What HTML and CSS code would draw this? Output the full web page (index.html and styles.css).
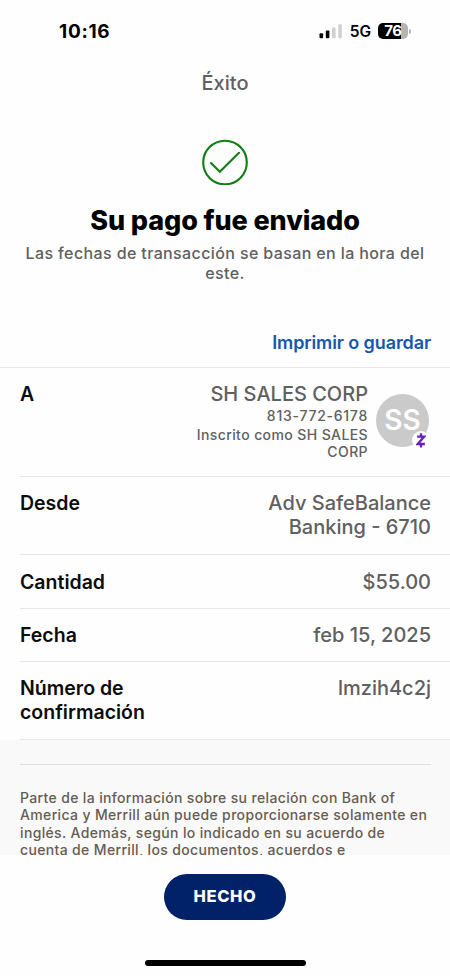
FILE: index.html
```html
<!DOCTYPE html>
<html lang="es">
<head>
    <meta charset="UTF-8">
    <meta name="viewport" content="width=device-width, initial-scale=1.0">
    <title>Éxito</title>
    <link rel="stylesheet" href="styles.css">
</head>
<body>
    <div class="screen">
        <div class="status-bar">
            <span class="time">10:16</span>
            <div class="status-icons">
                <svg class="signal" width="24" height="15" viewBox="0 0 24 15">
                    <rect x="0.5" y="9.2" width="3.6" height="5" rx="1"/>
                    <rect x="6.8" y="6.4" width="3.6" height="7.8" rx="1"/>
                    <rect class="off" x="13" y="3.4" width="3.6" height="10.8" rx="1"/>
                    <rect class="off" x="19.3" y="0.2" width="3.6" height="14" rx="1"/>
                </svg>
                <span class="network">5G</span>
                <div class="battery"><span>76</span></div>
                <div class="battery-tip"></div>
            </div>
        </div>

        <header class="nav-title">Éxito</header>

        <section class="result">
            <svg class="check" width="46" height="46" viewBox="0 0 46 46">
                <circle cx="23" cy="23.5" r="21.8"/>
                <path d="M9 24 L17.8 32.7 L37 13.8"/>
            </svg>
            <h1>Su pago fue enviado</h1>
            <p>Las fechas de transacción se basan en la hora del este.</p>
        </section>

        <div class="actions">
            <a href="#">Imprimir o guardar</a>
        </div>

        <div class="details">
            <div class="row row-to">
                <span class="label">A</span>
                <div class="recipient">
                    <div class="recipient-text">
                        <div class="value">SH SALES CORP</div>
                        <div class="small phone">813-772-6178</div>
                        <div class="small">Inscrito como SH SALES CORP</div>
                    </div>
                    <div class="avatar">
                        <span>SS</span>
                        <div class="zelle">
                            <svg width="10" height="15" viewBox="0 0 10 15">
                                <path d="M5 0.3 V3 M1.2 3.6 H8.2 L1.8 11 H8.9 M5 11.5 V14.5"/>
                            </svg>
                        </div>
                    </div>
                </div>
            </div>
            <div class="row row-from">
                <span class="label">Desde</span>
                <span class="value">Adv SafeBalance<br>Banking - 6710</span>
            </div>
            <div class="row">
                <span class="label">Cantidad</span>
                <span class="value">$55.00</span>
            </div>
            <div class="row">
                <span class="label">Fecha</span>
                <span class="value">feb 15, 2025</span>
            </div>
            <div class="row row-number">
                <span class="label">Número de<br>confirmación</span>
                <span class="value">lmzih4c2j</span>
            </div>
        </div>

        <div class="disclosure">
            <p>
                Parte de la información sobre su relación con Bank of<br>
                America y Merrill aún puede proporcionarse solamente en<br>
                inglés. Además, según lo indicado en su acuerdo de<br>
                cuenta de Merrill, los documentos, acuerdos e
            </p>
        </div>

        <footer class="bottom">
            <button class="done">HECHO</button>
            <div class="home-bar"></div>
        </footer>
    </div>
</body>
</html>
```
FILE: styles.css
```css
:root {
    --text: #0c0c0c;
    --gray: #606060;
    --line: #e6e6e6;
    --link: #1257b0;
    --navy: #012169;
    --green: #117d14;
}

* {
    box-sizing: border-box;
}

body {
    margin: 0;
    background: #fefefe;
    color: var(--text);
    font-family: Inter, "Liberation Sans", sans-serif;
}

.screen {
    width: 450px;
    height: 976px;
    overflow: hidden;
    display: flex;
    flex-direction: column;
}

/* Status bar */
.status-bar {
    height: 62px;
    flex: none;
    display: flex;
    justify-content: space-between;
    align-items: center;
    padding: 0 39px 0 59px;
    color: #000;
}

.time {
    font-size: 19px;
    font-weight: 700;
    letter-spacing: 0.7px;
}

.status-icons {
    display: flex;
    align-items: center;
}

.signal {
    fill: #000;
    margin-right: 7px;
}

.signal .off {
    fill: #d0d0d0;
}

.network {
    font-size: 15.5px;
    font-weight: 600;
    margin-right: 7px;
}

.battery {
    width: 30px;
    height: 16px;
    border-radius: 5px;
    background: linear-gradient(to right, #000 76%, #b4b4b4 76%);
    color: #fff;
    font-size: 15px;
    font-weight: 700;
    line-height: 16px;
    text-align: center;
    letter-spacing: -0.3px;
}

.battery-tip {
    width: 2px;
    height: 5px;
    margin-left: 1px;
    border-radius: 0 2px 2px 0;
    background: #b4b4b4;
}

.nav-title {
    height: 42px;
    flex: none;
    line-height: 42px;
    text-align: center;
    color: var(--gray);
    font-size: 20px;
    font-weight: 500;
}

/* Payment result */
.result {
    height: 209px;
    flex: none;
    padding: 35px 20px 0;
    text-align: center;
}

.check {
    display: block;
    margin: 0 auto;
    fill: none;
    stroke: var(--green);
    stroke-width: 2.1;
    stroke-linecap: round;
}

.result h1 {
    margin: 20px 0 0;
    color: #000;
    font-size: 27px;
    line-height: 32px;
    font-weight: 800;
    letter-spacing: -0.1px;
}

.result p {
    margin: 6px 0 0;
    color: var(--gray);
    font-size: 16px;
    line-height: 20px;
    font-weight: 500;
    letter-spacing: 0.38px;
}

.actions {
    height: 55px;
    flex: none;
    padding-right: 19px;
    text-align: right;
    line-height: 60px;
    border-bottom: 1px solid var(--line);
}

.actions a {
    color: var(--link);
    font-size: 18px;
    font-weight: 600;
    letter-spacing: -0.1px;
    text-decoration: none;
}

/* Details */
.details {
    flex: none;
    padding-left: 20px;
}

.row {
    height: 53.3px;
    display: flex;
    justify-content: space-between;
    padding: 14.3px 19px 0 0;
    border-bottom: 1px solid var(--line);
    font-size: 19.5px;
    line-height: 24px;
    font-weight: 500;
}

.row-to {
    height: 109px;
    padding-right: 21px;
}

.row-from,
.row-number {
    height: 78.3px;
}

.label {
    font-weight: 600;
}

.value {
    color: var(--gray);
    font-size: 20px;
    text-align: right;
}

.recipient {
    display: flex;
    gap: 8px;
}

.recipient-text {
    width: 176px;
    text-align: right;
}

.small {
    color: var(--gray);
    font-size: 14px;
    line-height: 17px;
    letter-spacing: 0.4px;
}

.phone {
    margin: 1px 0 2px;
    letter-spacing: 0.75px;
}

.avatar {
    position: relative;
    width: 53px;
    height: 53px;
    margin-top: 12px;
    border-radius: 50%;
    background: #cacaca;
    color: #fff;
    font-size: 28px;
    line-height: 53px;
    font-weight: 600;
    text-align: center;
}

.zelle {
    position: absolute;
    right: -1px;
    bottom: -2px;
    width: 18px;
    height: 18px;
    border-radius: 50%;
    background: #fefefe;
    display: flex;
    justify-content: center;
    align-items: center;
}

.zelle svg {
    fill: none;
    stroke: #6a1fc0;
    stroke-width: 2.3;
}

/* Legal text */
.disclosure {
    height: 115.3px;
    flex: none;
    overflow: hidden;
    padding: 24px 19px 0 20px;
    background: #f9f9f9;
}

.disclosure p {
    margin: 0;
    padding-top: 24px;
    border-top: 1px solid #dedede;
    color: #665c52;
    font-size: 14px;
    line-height: 17.2px;
    font-weight: 500;
    letter-spacing: 0.35px;
    white-space: nowrap;
}

.bottom {
    flex: 1;
    display: flex;
    flex-direction: column;
    align-items: center;
    padding-top: 19px;
}

.done {
    width: 122px;
    height: 46px;
    padding: 0 0 2px;
    border: 0;
    border-radius: 23px;
    background: var(--navy);
    color: #fff;
    font-family: inherit;
    font-size: 16.5px;
    font-weight: 800;
    letter-spacing: 0.6px;
}

.home-bar {
    width: 161px;
    height: 6px;
    margin-top: 40px;
    border-radius: 3px;
    background: #000;
}
```
